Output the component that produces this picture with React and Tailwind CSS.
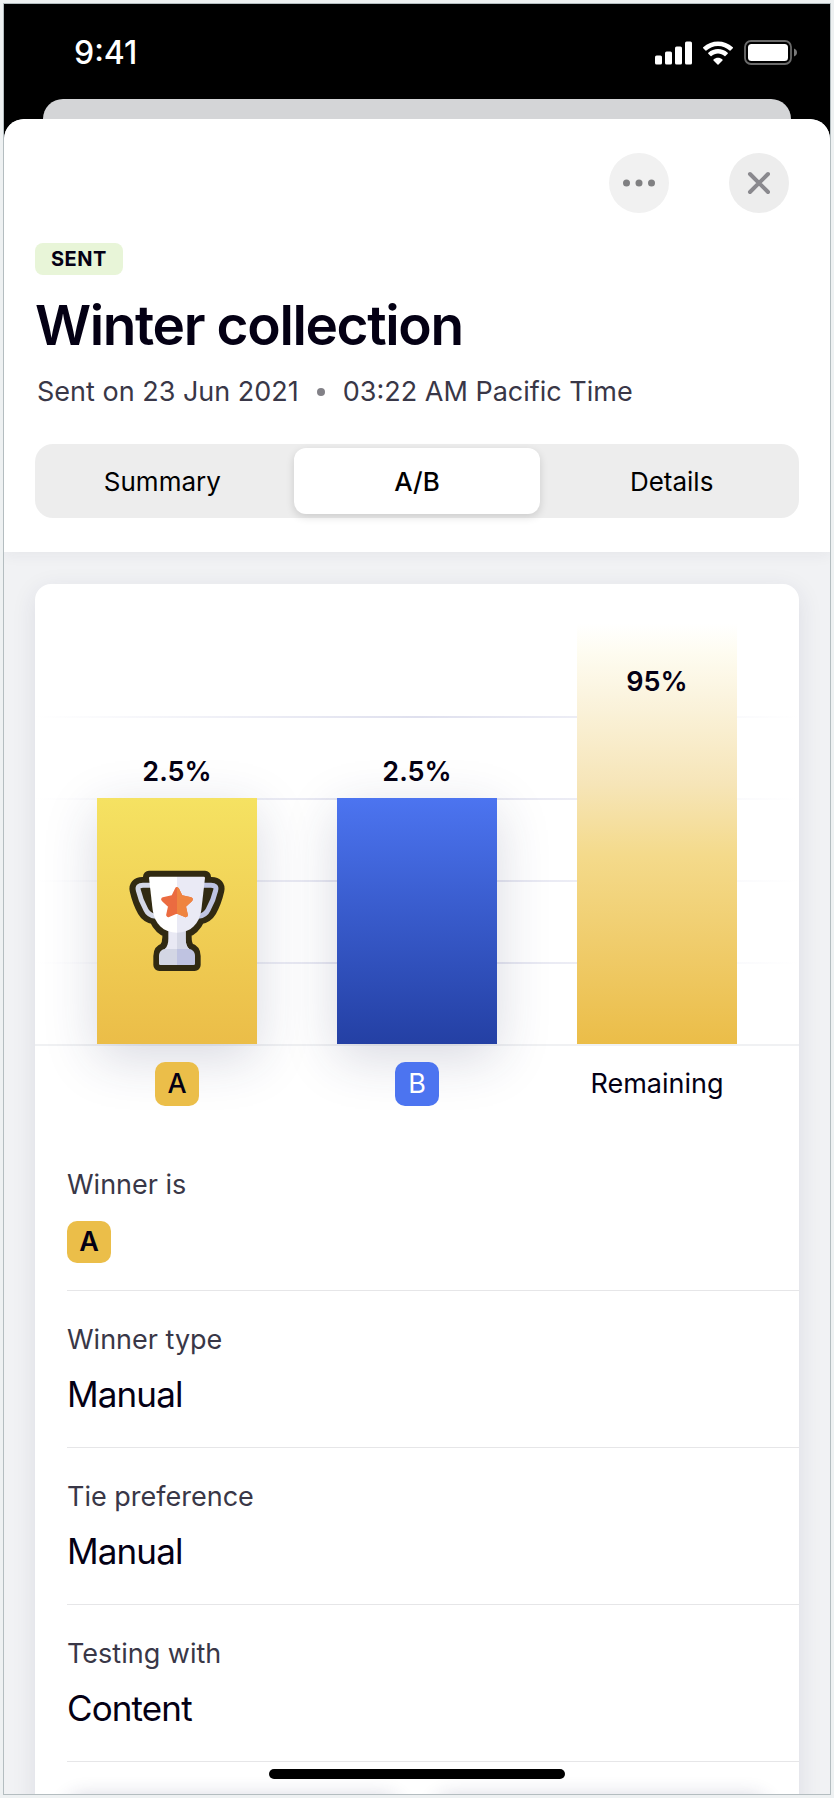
import React, { useState } from "react";

const TABS = ["Summary", "A/B", "Details"];

const ROWS = [
  { label: "Winner type", value: "Manual" },
  { label: "Tie preference", value: "Manual" },
  { label: "Testing with", value: "Content" },
];

function SignalIcon() {
  return (
    <svg className="h-[24px] w-[37px]" viewBox="0 0 37 24" fill="white" aria-hidden="true">
      <rect x="0" y="14.6" width="7" height="9" rx="1.6" />
      <rect x="10" y="10.6" width="7" height="13" rx="1.6" />
      <rect x="20" y="5.6" width="7" height="18" rx="1.6" />
      <rect x="30" y="0.6" width="7" height="23" rx="1.6" />
    </svg>
  );
}

function WifiIcon() {
  return (
    <svg className="h-[24px] w-[32px]" viewBox="0 0 32 24" fill="white" aria-hidden="true">
      <path d="M16 4.9c4.4 0 8.500 1.700 11.600 4.700.3.3.6.3.9 0l2.300-2.300c.3-.3.3-.7 0-1C22.600-1.500 9.400-1.500 1.200 6.300c-.3.3-.3.7 0 1l2.300 2.300c.3.300.6.300.9 0C7.500 6.600 11.600 4.900 16 4.900z" />
      <path d="M16 12.600c2.400 0 4.700.9 6.500 2.500.3.3.6.3.9 0l2.300-2.300c.3-.3.3-.7 0-1-5.500-5-13.900-5-19.400 0-.3.3-.3.7 0 1l2.300 2.300c.3.300.6.300.9 0 1.800-1.600 4.100-2.500 6.500-2.500z" />
      <path d="M20.500 17.900c.3-.3.3-.7 0-1-2.600-2.200-6.400-2.200-9 0-.3.3-.3.7 0 1l4 4c.3.3.7.3 1 0z" transform="translate(0 1.600)" />
    </svg>
  );
}

function BatteryIcon() {
  return (
    <svg className="h-[25px] w-[53px]" viewBox="0 0 53 25" aria-hidden="true">
      <rect x="1" y="1" width="46" height="23" rx="6" fill="none" stroke="#6b6b6b" strokeWidth="1.8" />
      <rect x="4" y="4" width="40" height="17" rx="3.500" fill="white" />
      <path d="M50 8.500c1.800.7 3 2.200 3 4s-1.200 3.300-3 4z" fill="#7a7a7a" />
    </svg>
  );
}

function TrophyIcon() {
  const silhouette =
    "M117 80H285V99H305C320 99 328 108 325 121C320 143 312 165 302 183C294 197 284 203 267 206C257 228 244 240 227 246V262C227 276 230 288 237 296C248 299 254 307 254 318V345H148V318C148 307 154 299 164 296C171 288 175 276 175 262V246C158 240 145 228 135 206C118 203 108 197 100 183C90 165 82 143 77 121C74 108 82 99 97 99H117Z";
  const star =
    "M201 118L212 141L242 148L221 168L227 195L201 184L175 195L181 168L160 148L190 141Z";
  return (
    <svg className="h-[102px] w-[100px]" viewBox="51 60 300 306" role="img" aria-label="Winner trophy">
      <defs>
        <clipPath id="rightHalf">
          <rect x="201" y="60" width="160" height="310" />
        </clipPath>
      </defs>
      <path d={silhouette} fill="#312a12" stroke="#312a12" strokeWidth="36" strokeLinejoin="round" />
      <path
        d="M124 106H99C87 106 82 111 85 121C90 143 97 160 107 178C113 191 123 197 137 199"
        fill="none"
        stroke="#d3d7e6"
        strokeWidth="15"
      />
      <path
        d="M278 106H303C315 106 320 111 317 121C312 143 305 160 295 178C289 191 279 197 265 199"
        fill="none"
        stroke="#bfc4e2"
        strokeWidth="15"
      />
      <path d="M175 240H227V266C227 280 230 290 238 297H164C172 290 175 280 175 266Z" fill="#e9e9f4" />
      <path d="M201 240H227V266C227 280 230 290 238 297H201Z" fill="#d6d8e6" />
      <path d="M164 297H201V345H151Q147 345 147 341V318C147 306 154 299 164 297Z" fill="#d3d6e4" />
      <path d="M238 297H201V345H251Q255 345 255 341V318C255 306 248 299 238 297Z" fill="#bfc3e1" />
      <path d="M121 80H201V248C160 248 134 222 128 180L117 84Q117 80 121 80Z" fill="white" />
      <path d="M281 80H201V248C242 248 268 222 274 180L285 84Q285 80 281 80Z" fill="#eaeaf5" />
      <path d={star} fill="#eb6b40" stroke="#eb6b40" strokeWidth="13" strokeLinejoin="round" />
      <path d={star} fill="#ef8440" stroke="#ef8440" strokeWidth="13" strokeLinejoin="round" clipPath="url(#rightHalf)" />
    </svg>
  );
}

function StatusBar() {
  return (
    <div className="flex h-[95px] shrink-0 items-center justify-between pt-0.5 pr-[33px] pl-[70px]">
      <span className="text-[32px] leading-10 font-medium text-white">9:41</span>
      <div className="flex items-center gap-[10px]">
        <SignalIcon />
        <WifiIcon />
        <BatteryIcon />
      </div>
    </div>
  );
}

function SheetHeader() {
  const [active, setActive] = useState("A/B");
  return (
    <header className="relative rounded-t-[20px] bg-white px-[31px] pt-[34px] pb-[34px] shadow-[0_4px_14px_rgba(30,30,70,0.05)]">
      <div className="flex justify-end gap-[60px] pr-[10px]">
        <button type="button" aria-label="More options" className="flex size-[60px] items-center justify-center rounded-full bg-[#f1f1f1]">
          <svg className="h-[8px] w-[32px]" viewBox="0 0 32 8" fill="#808082">
            <circle cx="3.500" cy="4" r="3.500" />
            <circle cx="16" cy="4" r="3.500" />
            <circle cx="28.500" cy="4" r="3.500" />
          </svg>
        </button>
        <button type="button" aria-label="Close" className="flex size-[60px] items-center justify-center rounded-full bg-[#ededed]">
          <svg className="size-[24px]" viewBox="0 0 24 24" fill="none" stroke="#8a898e" strokeWidth="4" strokeLinecap="round">
            <path d="M3 3L21 21M21 3L3 21" />
          </svg>
        </button>
      </div>
      <div className="mt-[30px] flex">
        <span className="rounded-lg bg-[#e8f5d8] px-4 text-[20px] leading-8 font-bold tracking-wide text-[#040014]">SENT</span>
      </div>
      <h1 className="mt-[18px] text-[55px] leading-[64px] font-semibold tracking-tight text-[#040014]">Winter collection</h1>
      <p className="mt-[19px] flex items-center pl-0.5 text-[27px] leading-8 text-[#393747]">
        Sent on 23 Jun 2021
        <span className="mx-[18px] size-2 rounded-full bg-[#828187]" />
        03:22 AM Pacific Time
      </p>
      <div role="tablist" className="mt-9 grid grid-cols-3 gap-2 rounded-[18px] bg-[#ededed] p-1">
        {TABS.map((tab) => (
          <button
            key={tab}
            type="button"
            role="tab"
            aria-selected={tab === active}
            onClick={() => setActive(tab)}
            className={
              tab === active
                ? "h-[66px] rounded-xl bg-white text-[26px] font-medium text-black shadow-[0_3px_8px_rgba(0,0,0,0.14)]"
                : "h-[66px] rounded-xl text-[26px] text-black"
            }
          >
            {tab}
          </button>
        ))}
      </div>
    </header>
  );
}

function Chart() {
  return (
    <section aria-label="A/B results">
      <div className="relative grid h-[462px] grid-cols-3 items-end border-b-2 border-[#f0f1f3] px-[22px]">
        <div className="absolute inset-x-0 bottom-20 flex h-[248px] flex-col justify-between" aria-hidden="true">
          {[0, 1, 2, 3].map((n) => (
            <div key={n} className="h-0.5 bg-linear-to-r from-transparent via-[#dfe0ee] to-transparent" />
          ))}
        </div>
        <div className="relative flex flex-col items-center">
          <span className="mb-[10px] text-[27px] leading-8 font-semibold text-[#040014]">2.5%</span>
          <div className="flex h-[246px] w-2/3 items-center justify-center bg-linear-to-b from-[#f5e262] to-[#ebbd48] shadow-[0_14px_50px_rgba(40,44,90,0.18)]">
            <TrophyIcon />
          </div>
        </div>
        <div className="relative flex flex-col items-center">
          <span className="mb-[10px] text-[27px] leading-8 font-semibold text-[#040014]">2.5%</span>
          <div className="h-[246px] w-2/3 bg-linear-to-b from-[#4c74f0] to-[#2440a4] shadow-[0_14px_50px_rgba(40,44,90,0.18)]" />
        </div>
        <div className="relative flex flex-col items-center">
          <div className="flex h-[420px] w-2/3 justify-center bg-[linear-gradient(to_bottom,#ffffff_0%,#fefcf0_7%,#fbf4df_17%,#f6e5b8_38%,#f4da8b_55%,#ebbd48_100%)] pt-[42px] text-[27px] leading-8 font-semibold text-[#040014]">
            95%
          </div>
        </div>
      </div>
      <div className="relative grid grid-cols-3 items-center justify-items-center px-[22px] pt-4 text-[27px] leading-8 text-[#040014]">
        <span className="flex h-11 w-11 items-center justify-center rounded-[10px] bg-[#ebbe49] font-medium">A</span>
        <span className="flex h-11 w-11 items-center justify-center rounded-[10px] bg-[#4c74f0] text-white">B</span>
        <span>Remaining</span>
      </div>
    </section>
  );
}

function Facts() {
  return (
    <dl className="mt-[63px] pl-8 text-[#040014]">
      <div className="border-b border-[#e6e6e8] pb-[27px]">
        <dt className="text-[27px] leading-8 text-[#393747]">Winner is</dt>
        <dd className="mt-5 flex h-[42px] w-11 items-center justify-center rounded-[10px] bg-[#ebbe49] text-[27px] font-semibold">A</dd>
      </div>
      {ROWS.map((row) => (
        <div key={row.label} className="border-b border-[#e6e6e8] pt-[33px] pb-[31px]">
          <dt className="text-[27px] leading-8 text-[#393747]">{row.label}</dt>
          <dd className="mt-4 text-[35px] leading-[44px] tracking-tight">{row.value}</dd>
        </div>
      ))}
    </dl>
  );
}

export default function App() {
  return (
    <div className="h-screen bg-[#eef1f2] p-[3px] font-['Inter','Liberation_Sans',sans-serif]">
      <div className="relative flex h-full flex-col overflow-hidden border border-[#b4bdc0] bg-black">
        <StatusBar />
        <div className="mx-[39px] h-5 shrink-0 rounded-t-[20px] bg-[#d4d5d7]" />
        <main className="flex min-h-0 flex-1 flex-col overflow-hidden rounded-t-[20px] bg-[#f1f2f4]">
          <SheetHeader />
          <div className="min-h-0 flex-1 overflow-y-auto px-[31px] pt-8 [scrollbar-width:none]">
            <div className="rounded-2xl bg-white pb-8 shadow-[0_6px_24px_rgba(40,40,90,0.1)]">
              <Chart />
              <Facts />
              <div className="mt-[34px] grid h-40 grid-cols-2 gap-9 px-8">
                <div className="rounded-2xl bg-white shadow-[0_0_20px_rgba(40,40,90,0.2)]" />
                <div className="rounded-2xl bg-white shadow-[0_0_20px_rgba(40,40,90,0.2)]" />
              </div>
            </div>
          </div>
        </main>
        <div className="absolute bottom-[15px] left-1/2 h-[10px] w-[296px] -translate-x-1/2 rounded-full bg-black" />
      </div>
    </div>
  );
}
